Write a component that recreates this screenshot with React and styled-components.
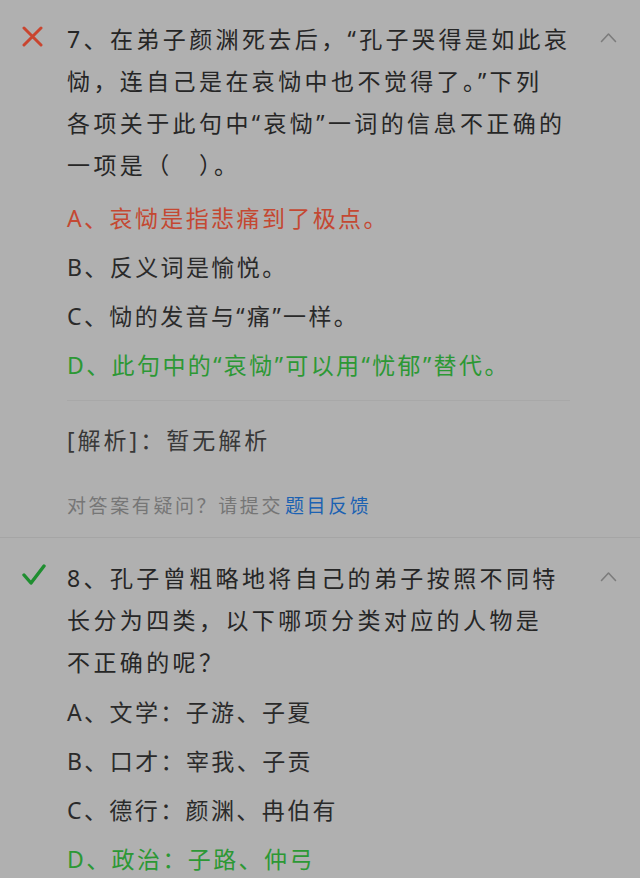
import React from "react";
import styled, { createGlobalStyle } from "styled-components";

const Global = createGlobalStyle`
  html, body {
    margin: 0;
    padding: 0;
    background: #b0b0b0;
  }
  body {
    font-family: "Noto Sans", "Noto Sans CJK SC", sans-serif;
    color: #262626;
  }
`;

const Page = styled.div`
  width: 640px;
  min-height: 878px;
  background: #b0b0b0;
  overflow: hidden;
`;

const Question = styled.section`
  padding-top: ${(p) => p.$top}px;
`;

const Header = styled.div`
  display: grid;
  grid-template-columns: 67px 1fr 60px;
  align-items: start;
`;

const StatusCell = styled.div`
  height: 42px;
  display: flex;
  align-items: flex-start;
  padding-left: 22px;
  padding-top: ${(p) => p.$dy}px;
  box-sizing: border-box;
`;

const QText = styled.div`
  font-size: 23px;
  line-height: 42px;
  letter-spacing: 3.4px;
  color: #262626;
  white-space: nowrap;
`;

const ChevronCell = styled.div`
  height: 42px;
  display: flex;
  align-items: center;
  padding-left: 20px;
  padding-bottom: 4px;
  box-sizing: border-box;
`;

const Body = styled.div`
  padding-left: 67px;
  padding-right: 70px;
`;

const Options = styled.ul`
  list-style: none;
  margin: ${(p) => p.$gap}px 0 0;
  padding: 0;
`;

const toneColor = {
  wrong: "#c44832",
  right: "#2c9834",
  normal: "#2a2a2a",
};

const Option = styled.li`
  font-size: 23px;
  line-height: 49px;
  letter-spacing: 2.4px;
  white-space: nowrap;
  color: ${(p) => toneColor[p.$tone || "normal"]};
`;

const Divider = styled.hr`
  border: 0;
  height: 1px;
  background: #a8a8a8;
  margin: 10px 0 0;
`;

const Analysis = styled.p`
  margin: 18px 0 0;
  font-size: 23px;
  line-height: 42px;
  letter-spacing: 3px;
  color: #383838;
`;

const Feedback = styled.p`
  margin: 30px 0 0;
  font-size: 19px;
  line-height: 30px;
  letter-spacing: 2.6px;
  color: #767676;
`;

const FeedbackLink = styled.span`
  color: #1c62b2;
  margin-left: 2px;
`;

const Separator = styled.div`
  height: 1px;
  background: #a5a5a5;
  margin-top: 16px;
`;

const Cross = () => (
  <svg width="21" height="21" viewBox="0 0 21 21">
    <path d="M2 2 L19 19 M19 2 L2 19" stroke="#c9452f" strokeWidth="3" strokeLinecap="round" fill="none" />
  </svg>
);

const Check = () => (
  <svg width="24" height="22" viewBox="0 0 24 22">
    <path d="M2 11 L9 19 L22 2" stroke="#1f8e30" strokeWidth="3.4" strokeLinecap="round" strokeLinejoin="round" fill="none" />
  </svg>
);

const Chevron = () => (
  <svg width="17" height="11" viewBox="0 0 17 11">
    <path d="M1.5 9.5 L8.5 2 L15.5 9.5" stroke="#7c7c7c" strokeWidth="1.6" fill="none" strokeLinecap="round" strokeLinejoin="round" />
  </svg>
);

export default function App() {
  return (
    <Page>
      <Global />
      <Question $top={18}>
        <Header>
          <StatusCell $dy={8}>
            <Cross />
          </StatusCell>
          <QText>
            7、在弟子颜渊死去后，“孔子哭得是如此哀
            <br />
            恸，连自己是在哀恸中也不觉得了。”下列
            <br />
            各项关于此句中“哀恸”一词的信息不正确的
            <br />
            一项是（　）。
          </QText>
          <ChevronCell>
            <Chevron />
          </ChevronCell>
        </Header>
        <Body>
          <Options $gap={8}>
            <Option $tone="wrong">A、哀恸是指悲痛到了极点。</Option>
            <Option>B、反义词是愉悦。</Option>
            <Option>C、恸的发音与“痛”一样。</Option>
            <Option $tone="right">D、此句中的“哀恸”可以用“忧郁”替代。</Option>
          </Options>
          <Divider />
          <Analysis>[解析]：暂无解析</Analysis>
          <Feedback>
            对答案有疑问？请提交<FeedbackLink>题目反馈</FeedbackLink>
          </Feedback>
        </Body>
      </Question>
      <Separator />
      <Question $top={19}>
        <Header>
          <StatusCell $dy={7}>
            <Check />
          </StatusCell>
          <QText>
            8、孔子曾粗略地将自己的弟子按照不同特
            <br />
            长分为四类，以下哪项分类对应的人物是
            <br />
            不正确的呢？
          </QText>
          <ChevronCell>
            <Chevron />
          </ChevronCell>
        </Header>
        <Body>
          <Options $gap={5}>
            <Option>A、文学：子游、子夏</Option>
            <Option>B、口才：宰我、子贡</Option>
            <Option>C、德行：颜渊、冉伯有</Option>
            <Option $tone="right">D、政治：子路、仲弓</Option>
          </Options>
        </Body>
      </Question>
    </Page>
  );
}
